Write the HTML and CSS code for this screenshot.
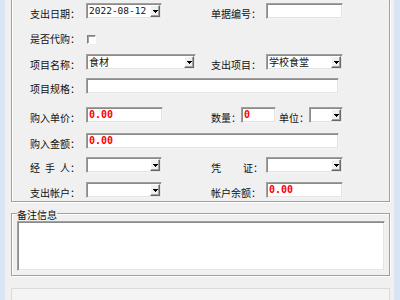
FILE: index.html
```html
<!DOCTYPE html>
<html>
<head>
<meta charset="utf-8">
<link rel="stylesheet" href="styles.css">
</head>
<body>
<div class="frame">
  <div class="edge edge-l"></div>
  <main class="main">
    <section class="group">
      <div class="form">
        <span class="lbl">支出日期：</span>
        <div class="ctl sel w76"><span class="val num">2022-08-12</span><span class="dd"><svg width="5" height="3" viewBox="0 0 5 3" shape-rendering="crispEdges"><path d="M0 0h5v1h-1v1h-1v1h-1v-1h-1v-1h-1z" fill="#000"/></svg></span></div>
        <span class="lbl">单据编号：</span>
        <div class="ctl w77"></div>

        <span class="lbl flat">是否代购：</span>
        <div class="chkcell"><span class="chk"></span></div>

        <span class="lbl">项目名称：</span>
        <div class="ctl sel w110"><span class="val">食材</span><span class="dd"><svg width="5" height="3" viewBox="0 0 5 3" shape-rendering="crispEdges"><path d="M0 0h5v1h-1v1h-1v1h-1v-1h-1v-1h-1z" fill="#000"/></svg></span></div>
        <span class="lbl">支出项目：</span>
        <div class="ctl sel w77"><span class="val">学校食堂</span><span class="dd"><svg width="5" height="3" viewBox="0 0 5 3" shape-rendering="crispEdges"><path d="M0 0h5v1h-1v1h-1v1h-1v-1h-1v-1h-1z" fill="#000"/></svg></span></div>

        <span class="lbl">项目规格：</span>
        <div class="ctl wide"></div>

        <span class="lbl">购入单价：</span>
        <div class="ctl w77"><span class="val red">0.00</span></div>
        <div class="qty">
          <span class="lbl w30">数量：</span>
          <div class="ctl w35"><span class="val red">0</span></div>
          <span class="lbl w30 ml3">单位：</span>
          <div class="ctl sel w34"><span class="dd"><svg width="5" height="3" viewBox="0 0 5 3" shape-rendering="crispEdges"><path d="M0 0h5v1h-1v1h-1v1h-1v-1h-1v-1h-1z" fill="#000"/></svg></span></div>
        </div>

        <span class="lbl">购入金额：</span>
        <div class="ctl wide"><span class="val red">0.00</span></div>

        <span class="lbl"><span class="sp5">经手</span>人：</span>
        <div class="ctl sel w76"><span class="dd"><svg width="5" height="3" viewBox="0 0 5 3" shape-rendering="crispEdges"><path d="M0 0h5v1h-1v1h-1v1h-1v-1h-1v-1h-1z" fill="#000"/></svg></span></div>
        <span class="lbl"><span class="sp22">凭</span>证：</span>
        <div class="ctl sel w77"><span class="dd"><svg width="5" height="3" viewBox="0 0 5 3" shape-rendering="crispEdges"><path d="M0 0h5v1h-1v1h-1v1h-1v-1h-1v-1h-1z" fill="#000"/></svg></span></div>

        <span class="lbl">支出帐户：</span>
        <div class="ctl sel w76"><span class="dd"><svg width="5" height="3" viewBox="0 0 5 3" shape-rendering="crispEdges"><path d="M0 0h5v1h-1v1h-1v1h-1v-1h-1v-1h-1z" fill="#000"/></svg></span></div>
        <span class="lbl">帐户余额：</span>
        <div class="ctl w77"><span class="val red">0.00</span></div>
      </div>
    </section>

    <fieldset class="memo">
      <legend>备注信息</legend>
      <div class="ta"></div>
    </fieldset>

    <div class="foot"></div>
  </main>
  <div class="edge edge-r"></div>
</div>
</body>
</html>
```

FILE: styles.css
```css
* { box-sizing: border-box; }
html, body { margin: 0; height: 100%; }
body {
  background: #f0f0f0;
  font-family: "Noto Sans CJK SC", "Noto Sans", sans-serif;
  font-size: 10px;
  color: #111;
  overflow: hidden;
}
.frame { display: flex; height: 300px; }
.edge { background: #d9e5f5; flex: none; }
.edge-l { width: 5px; }
.edge-r { width: 6px; }
.main {
  flex: 1;
  padding: 0 4px 0 6px;
  display: flex;
  flex-direction: column;
  min-width: 0;
}
.group {
  flex: none;
  height: 202px;
  border: 1px solid #a0a0a0;
  border-top: none;
  box-shadow: inset 1px 0 #fff, 1px 1px #fff;
  padding: 3px 0 3px 18px;
}
.form {
  display: grid;
  grid-template-columns: 56px 125px 55px 1fr;
  grid-template-rows: 28px 23px 24px 29px 26px 24px 25px 16px;
  align-items: start;
}
.lbl {
  line-height: 16px;
  padding-top: 3px;
  white-space: nowrap;
}
.lbl.flat { padding-top: 0; }
.sp5 { letter-spacing: 5px; }
.sp22 { letter-spacing: 22px; }
.w30 { width: 30px; flex: none; }
.ml3 { margin-left: 3px; }

.ctl {
  height: 16px;
  background: #fff;
  border: 1px solid;
  border-color: #a0a0a0 #f4f4f4 #f4f4f4 #a0a0a0;
  box-shadow: inset 1px 1px #8a8a8a, inset -1px -1px #e3e3e3;
  display: flex;
  align-items: center;
  padding-left: 2px;
  overflow: hidden;
  flex: none;
}
.w34 { width: 34px; }
.w35 { width: 35px; }
.w76 { width: 76px; }
.w77 { width: 77px; }
.w110 { width: 110px; }
.wide { width: 253px; grid-column: 2 / 5; }

.val { white-space: nowrap; line-height: 12px; }
.num {
  font-family: "DejaVu Sans Mono", monospace;
  font-size: 9.5px;
  color: #111;
}
.red {
  font-family: "DejaVu Sans Mono", monospace;
  font-weight: bold;
  font-size: 10px;
  color: #f00;
}
.dd {
  margin-left: auto;
  margin-right: 1px;
  width: 10px;
  height: 12px;
  flex: none;
  background: #f0f0f0;
  border: 1px solid;
  border-color: #fff #696969 #696969 #fff;
  box-shadow: inset -1px -1px #a0a0a0;
  display: flex;
  align-items: center;
  justify-content: center;
}
.dd svg { display: block; }

.chkcell { grid-column: 2 / 5; padding-top: 4px; }
.chk {
  display: block;
  width: 9px;
  height: 9px;
  margin-left: 1px;
  background: #fff;
  border: 1px solid;
  border-color: #808080 #fff #fff #808080;
  box-shadow: inset 1px 1px #a0a0a0;
}

.qty {
  grid-column: 3 / 5;
  display: flex;
  align-items: flex-start;
}

.memo {
  flex: none;
  margin: 4px 0 0;
  padding: 1px 4px 4px 5px;
  border: 1px solid #a0a0a0;
  box-shadow: inset 1px 1px #fff, 1px 1px #fff;
  min-width: 0;
}
.memo legend {
  padding: 4px 0 0;
  line-height: 10px;
  font-size: 10px;
  color: #111;
}
.ta {
  height: 50px;
  background: #fff;
  border: 1px solid;
  border-color: #a0a0a0 #f4f4f4 #f4f4f4 #a0a0a0;
  box-shadow: inset 1px 1px #8a8a8a, inset -1px -1px #e3e3e3;
}
.foot {
  flex: none;
  margin-top: 12px;
  height: 20px;
  border: 1px solid #dadada;
  background: #f4f4f4;
}
```
